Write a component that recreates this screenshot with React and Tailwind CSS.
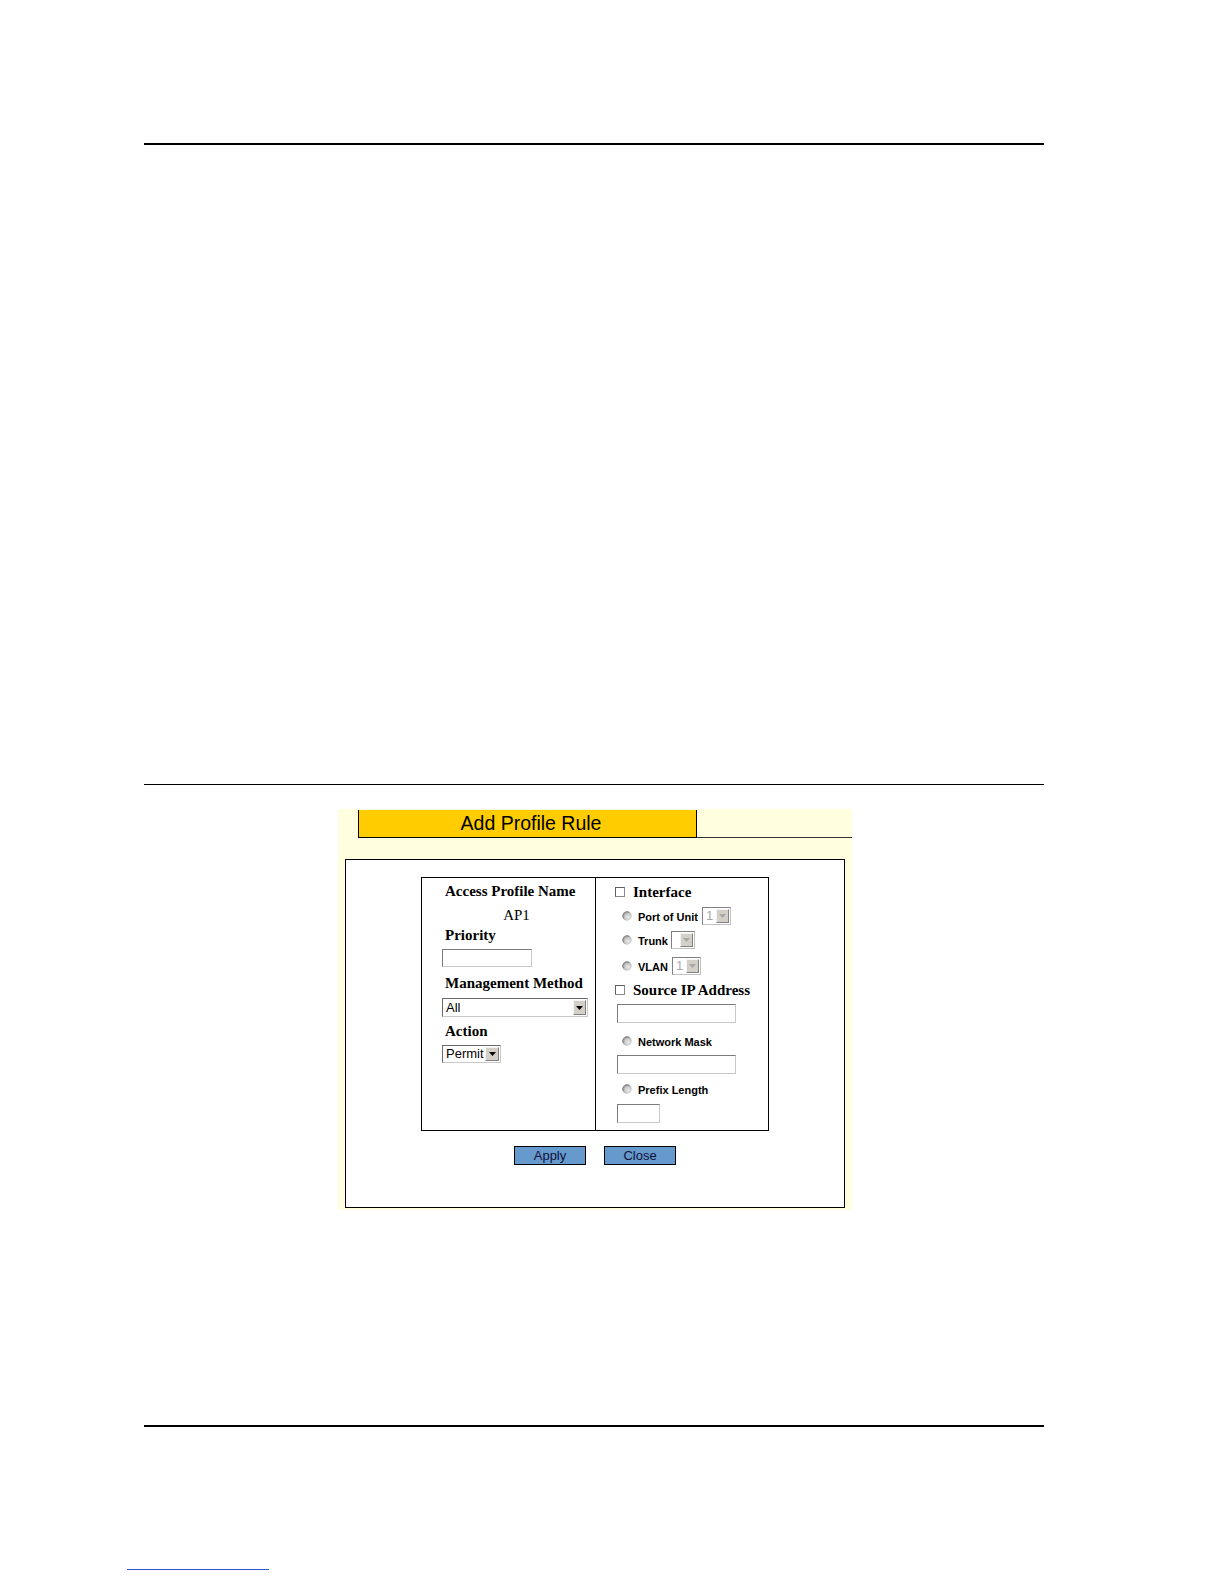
import React from "react";

const serif = "font-['Liberation_Serif','Times_New_Roman',serif]";
const sans = "font-['Liberation_Sans',Arial,sans-serif]";

function Arrow({ color = "#000" }) {
  return (
    <svg width="7" height="4" viewBox="0 0 7 4">
      <path d="M0 0 H7 L3.5 4 Z" fill={color} />
    </svg>
  );
}

function ArrowBtn({ disabled, w = "w-[12px]" }) {
  return (
    <div
      className={`${w} h-full bg-[#d4d0c8] border border-t-[#f4f4f4] border-l-[#f4f4f4] border-b-[#808080] border-r-[#808080] flex items-center justify-center`}
    >
      <Arrow color={disabled ? "#a8a8a8" : "#000"} />
    </div>
  );
}

function Radio() {
  return (
    <svg width="10" height="10" viewBox="0 0 10 10" className="shrink-0 block">
      <defs>
        <radialGradient id="rg" cx="0.62" cy="0.62" r="0.62">
          <stop offset="0" stopColor="#ececec" />
          <stop offset="0.55" stopColor="#cacaca" />
          <stop offset="1" stopColor="#9a9a9a" />
        </radialGradient>
      </defs>
      <circle cx="5" cy="5" r="4.7" fill="url(#rg)" />
      <path d="M1.4 7.2 A4.3 4.3 0 0 1 7.2 1.4" stroke="#858585" strokeWidth="1" fill="none" />
    </svg>
  );
}

function Checkbox() {
  return (
    <div className="w-[10px] h-[10px] shrink-0 bg-white border border-[#8a8a8a] border-t-[#606060] border-l-[#606060]" />
  );
}

function TextInput({ w, h = "h-[19px]" }) {
  return (
    <div
      className={`${w} ${h} bg-white border border-t-[#7a7a7a] border-l-[#7a7a7a] border-b-[#c8c8c8] border-r-[#c8c8c8]`}
    />
  );
}

function SmallSelect({ w, value }) {
  return (
    <div
      className={`${w} h-[18px] bg-white border border-t-[#808080] border-l-[#808080] border-b-[#c0c0c0] border-r-[#c0c0c0] flex items-stretch p-px`}
    >
      <div className={`flex-1 text-[13px] leading-[14px] text-[#a8a8a8] pl-[2px] ${sans}`}>{value}</div>
      <ArrowBtn disabled w="w-[13px]" />
    </div>
  );
}

function Label({ children, className = "" }) {
  return (
    <div className={`${serif} font-bold text-[15px] leading-[18px] h-[18px] text-black whitespace-nowrap ${className}`}>
      {children}
    </div>
  );
}

function RadioLabel({ children, className = "" }) {
  return (
    <div className={`${sans} font-bold text-[11px] leading-[13px] h-[13px] mt-[3px] text-black whitespace-nowrap ${className}`}>
      {children}
    </div>
  );
}

export default function App() {
  return (
    <div className="w-[1224px] h-[1584px] bg-white flex flex-col">
      <div className="ml-[144px] mt-[143px] w-[900px] h-[2px] bg-black" />
      <div className="ml-[144px] mt-[639px] w-[900px] h-px bg-black" />

      {/* panel */}
      <div className="ml-[338px] mt-[24px] w-[514px] h-[401px] bg-[#ffffe0] flex flex-col">
        <div className="flex h-[29px] pt-px">
          <div
            className={`ml-[20px] w-[339px] h-[28px] pl-[7px] bg-[#ffcc00] border-x border-b border-black flex items-center justify-center text-[19.5px] text-black ${sans}`}
          >
            Add Profile Rule
          </div>
          <div className="flex-1 h-[28px] border-b border-[#333]" />
        </div>

        <div className="ml-[7px] mt-[21px] w-[500px] h-[349px] bg-white border border-black flex flex-col items-center">
          <div className="mt-[17px] w-[348px] h-[254px] border border-black flex">
            {/* left column */}
            <div className="w-[174px] h-full border-r border-black flex flex-col pl-[20px] pt-[4px]">
              <Label className="ml-[3px]">Access Profile Name</Label>
              <div className={`mt-[6px] -ml-[4px] text-center text-[15px] leading-[18px] h-[18px] text-black ${serif}`}>AP1</div>
              <Label className="mt-[2px] ml-[3px]">Priority</Label>
              <div className="mt-[5px]">
                <TextInput w="w-[90px]" h="h-[18px]" />
              </div>
              <Label className="mt-[7px] ml-[3px]">Management Method</Label>
              <div className="mt-[6px] w-[146px] h-[19px] bg-white border border-t-[#6a6a6a] border-l-[#6a6a6a] border-b-[#c8c8c8] border-r-[#c8c8c8] flex items-stretch p-px">
                <div className={`flex-1 text-[13px] leading-[15px] text-black pl-[2px] ${sans}`}>All</div>
                <ArrowBtn w="w-[13px]" />
              </div>
              <Label className="mt-[5px] ml-[3px]">Action</Label>
              <div className="mt-[5px] w-[59px] h-[18px] bg-white border border-t-[#6a6a6a] border-l-[#6a6a6a] border-b-[#c8c8c8] border-r-[#c8c8c8] flex items-stretch p-px">
                <div className={`flex-1 text-[13px] leading-[14px] text-black pl-[2px] ${sans}`}>Permit</div>
                <ArrowBtn w="w-[14px]" />
              </div>
            </div>

            {/* right column */}
            <div className="flex-1 h-full flex flex-col pt-[5px]">
              <div className="flex items-center h-[18px] pl-[19px] gap-[8px]">
                <Checkbox />
                <Label>Interface</Label>
              </div>
              <div className="mt-[6px] h-[18px] flex items-center pl-[26px]">
                <Radio />
                <RadioLabel className="ml-[6px] mr-[4px]">Port of Unit</RadioLabel>
                <SmallSelect w="w-[29px]" value="1" />
              </div>
              <div className="mt-[6px] h-[18px] flex items-center pl-[26px]">
                <Radio />
                <RadioLabel className="ml-[6px] mr-[3px]">Trunk</RadioLabel>
                <SmallSelect w="w-[24px]" value="" />
              </div>
              <div className="mt-[8px] h-[18px] flex items-center pl-[26px]">
                <Radio />
                <RadioLabel className="ml-[6px] mr-[4px]">VLAN</RadioLabel>
                <SmallSelect w="w-[29px]" value="1" />
              </div>
              <div className="mt-[6px] flex items-center h-[18px] pl-[19px] gap-[8px]">
                <Checkbox />
                <Label>Source IP Address</Label>
              </div>
              <div className="mt-[5px] pl-[21px]">
                <TextInput w="w-[119px]" />
              </div>
              <div className="mt-[9px] h-[18px] flex items-center pl-[26px]">
                <Radio />
                <RadioLabel className="ml-[6px]">Network Mask</RadioLabel>
              </div>
              <div className="mt-[5px] pl-[21px]">
                <TextInput w="w-[119px]" />
              </div>
              <div className="mt-[6px] h-[18px] flex items-center pl-[26px]">
                <Radio />
                <RadioLabel className="ml-[6px]">Prefix Length</RadioLabel>
              </div>
              <div className="mt-[6px] pl-[21px]">
                <TextInput w="w-[43px]" />
              </div>
            </div>
          </div>

          <div className="mt-[15px] flex gap-[18px]">
            <div className={`w-[72px] h-[19px] bg-[#6699cc] border border-black flex items-center justify-center text-[13px] text-[#10103a] ${sans}`}>
              Apply
            </div>
            <div className={`w-[72px] h-[19px] bg-[#6699cc] border border-black flex items-center justify-center text-[13px] text-[#10103a] ${sans}`}>
              Close
            </div>
          </div>
        </div>
      </div>

      <div className="ml-[144px] mt-[215px] w-[900px] h-[2px] bg-black" />
      <div className="ml-[127px] mt-[142px] w-[142px] h-px bg-[#3355cc]" />
    </div>
  );
}
